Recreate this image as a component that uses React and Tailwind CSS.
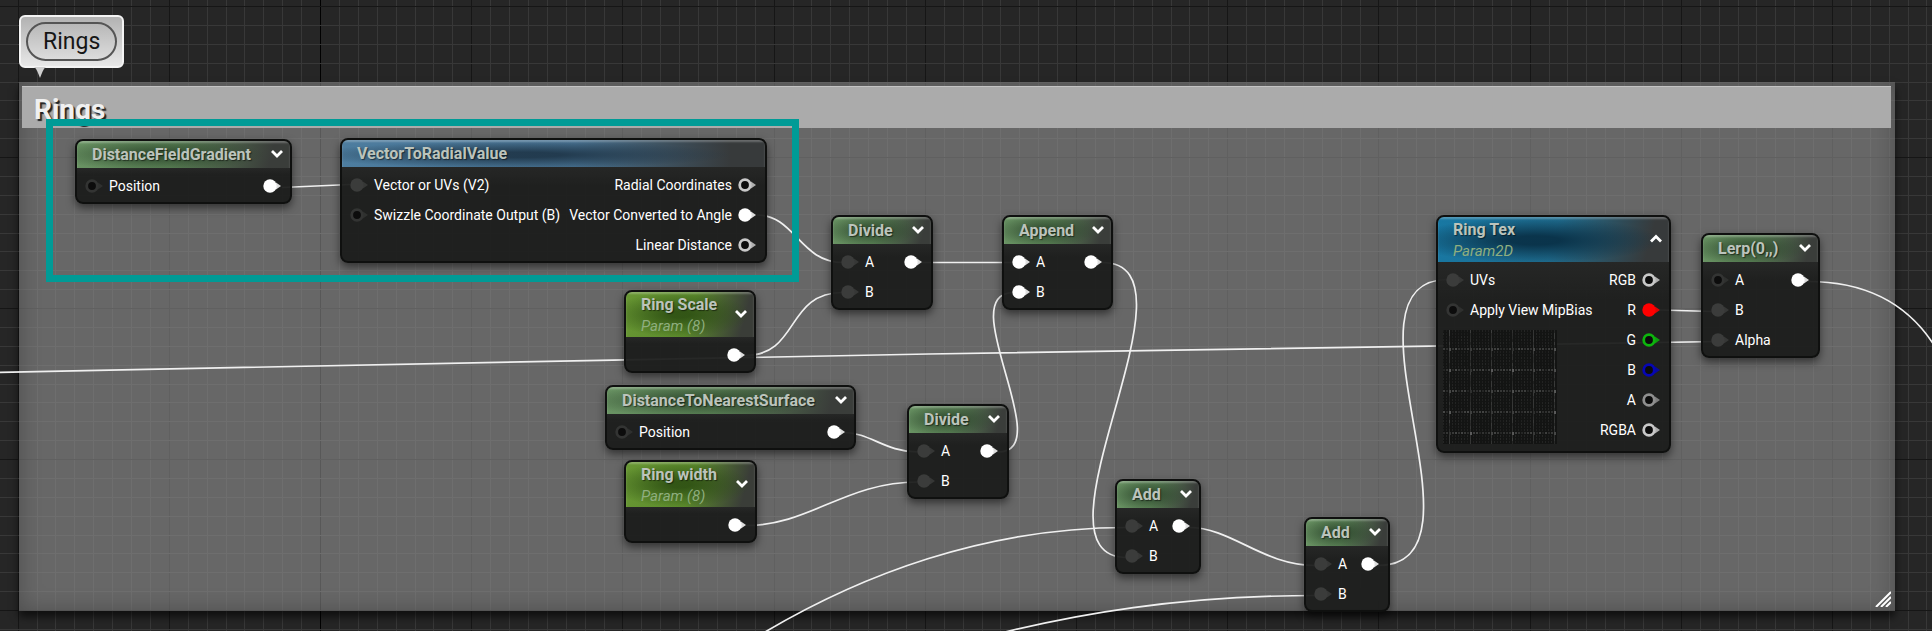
import React from "react";

const THEMES = {
  green: "bg-[radial-gradient(ellipse_50%_60%_at_38%_50%,rgba(38,62,38,0.7)_20%,transparent_100%),linear-gradient(105deg,#6a9464_0%,#5c8457_45%,#3a3d3a_90%)]",
  blue: "bg-[radial-gradient(ellipse_50%_50%_at_42%_55%,rgba(28,50,68,0.85)_20%,transparent_100%),linear-gradient(to_right,#4d7d9f_0%,#466f8e_55%,#373a3b_92%)]",
  lime: "bg-[radial-gradient(ellipse_55%_50%_at_42%_50%,rgba(40,72,16,0.8)_15%,transparent_100%),linear-gradient(105deg,#689733_0%,#5b8a2c_50%,#3a3d38_90%)]",
  cyan: "bg-[radial-gradient(ellipse_55%_50%_at_42%_52%,rgba(8,46,68,0.9)_20%,transparent_100%),linear-gradient(105deg,#1878a3_0%,#1f6c8e_50%,#373a3b_90%)]",
};

const IDLE = "#3b3c3b";

const NODES = [
  { id: "dfg", pos: "left-[75px] top-[139px] w-[217px]", theme: "green", title: "DistanceFieldGradient", toggle: "down",
    inputs: [["Position", "#333433", false]], outputs: [["", "#fff", true]] },
  { id: "vtr", pos: "left-[340px] top-[138px] w-[427px]", theme: "blue", title: "VectorToRadialValue",
    inputs: [["Vector or UVs (V2)", IDLE, true], ["Swizzle Coordinate Output (B)", "#333433", false]],
    outputs: [["Radial Coordinates", "#c8c8c8", false], ["Vector Converted to Angle", "#fff", true], ["Linear Distance", "#c8c8c8", false]] },
  { id: "scale", pos: "left-[624px] top-[290px] w-[132px]", theme: "lime", title: "Ring Scale", sub: "Param (8)", toggle: "down",
    inputs: [], outputs: [["", "#fff", true]] },
  { id: "dtns", pos: "left-[605px] top-[385px] w-[251px]", theme: "green", title: "DistanceToNearestSurface", toggle: "down",
    inputs: [["Position", "#333433", false]], outputs: [["", "#fff", true]] },
  { id: "width", pos: "left-[624px] top-[460px] w-[133px]", theme: "lime", title: "Ring width", sub: "Param (8)", toggle: "down",
    inputs: [], outputs: [["", "#fff", true]] },
  { id: "div1", pos: "left-[831px] top-[215px] w-[102px]", theme: "green", title: "Divide", toggle: "down",
    inputs: [["A", IDLE, true], ["B", IDLE, true]], outputs: [["", "#fff", true]] },
  { id: "append", pos: "left-[1002px] top-[215px] w-[111px]", theme: "green", title: "Append", toggle: "down",
    inputs: [["A", "#fff", true], ["B", "#fff", true]], outputs: [["", "#fff", true]] },
  { id: "div2", pos: "left-[907px] top-[404px] w-[102px]", theme: "green", title: "Divide", toggle: "down",
    inputs: [["A", IDLE, true], ["B", IDLE, true]], outputs: [["", "#fff", true]] },
  { id: "add1", pos: "left-[1115px] top-[479px] w-[86px]", theme: "green", title: "Add", toggle: "down",
    inputs: [["A", IDLE, true], ["B", IDLE, true]], outputs: [["", "#fff", true]] },
  { id: "add2", pos: "left-[1304px] top-[517px] w-[86px]", theme: "green", title: "Add", toggle: "down",
    inputs: [["A", IDLE, true], ["B", IDLE, true]], outputs: [["", "#fff", true]] },
  { id: "tex", pos: "left-[1436px] top-[215px] w-[235px]", theme: "cyan", title: "Ring Tex", sub: "Param2D", toggle: "up", preview: true,
    inputs: [["UVs", IDLE, true], ["Apply View MipBias", "#333433", false]],
    outputs: [["RGB", "#c8c8c8", false], ["R", "#f00", true], ["G", "#0db50d", false], ["B", "#0606b4", false], ["A", "#8f8f8f", false], ["RGBA", "#c8c8c8", false]] },
  { id: "lerp", pos: "left-[1701px] top-[233px] w-[119px]", theme: "green", title: "Lerp(0,,)", toggle: "down",
    inputs: [["A", "#333433", false], ["B", IDLE, true], ["Alpha", IDLE, true]], outputs: [["", "#fff", true]] },
];

const WIRES = [
  "M0 372.3L600 360.4C1000 352.5 1500 343 1719 341.5",
  "M282 187.5L350 184.5",
  "M757 215C795 215 800 262.5 843 262.5",
  "M745 355.5C800 355.5 785 292.5 843 292.5",
  "M922 262.5L1014 262.5",
  "M844 432.5C870 432.5 885 452 918 452",
  "M746 525.5C810 525.5 845 482 918 482",
  "M998 452C1059 452 951 292.5 1014 292.5",
  "M1102 262.5C1210 262.5 1020 557.5 1127 557.5",
  "M760 635C860 575 985 527.5 1127 527.5",
  "M1189 527.5C1232 527.5 1262 565.5 1316 565.5",
  "M985 637C1075 614 1180 595.5 1316 595.5",
  "M1378 565.5C1498 565.5 1329 279.5 1448 279.5",
  "M1660 310L1713 311.5",
  "M1808 281.5C1860 281.5 1905 300 1934 345",
];

const MINOR_X = Array.from({ length: 103 }, (_, i) => i - 17);
const MINOR_Y = Array.from({ length: 34 }, (_, i) => i);

function Grid() {
  return (
    <svg className="absolute inset-0 h-full w-full" aria-hidden="true" shapeRendering="crispEdges">
      {MINOR_X.map((i) => {
        const major = i % 8 === 0;
        const x = Math.round(320 + i * 18.9);
        return <rect key={"x" + i} x={x} y="0" width="1" height="100%" fill={i === 0 ? "#000" : major ? "#161616" : "#383838"} />;
      })}
      {MINOR_Y.map((i) => {
        const major = i % 8 === 0;
        const y = Math.round(6 + i * 18.875);
        return <rect key={"y" + i} x="0" y={y} width="100%" height="1" fill={major ? "#161616" : "#383838"} />;
      })}
    </svg>
  );
}

function Pin({ color, filled }) {
  return (
    <svg className="h-[14px] w-[18px] shrink-0" viewBox="0 0 18 14" aria-hidden="true">
      <path d="M13 3.5L18 7L13 10.5Z" fill={color} opacity="0.85" />
      {filled ? (
        <circle cx="7" cy="7" r="6.7" fill={color} />
      ) : (
        <circle cx="7" cy="7" r="5.3" fill="#0c0c0c" stroke={color} strokeWidth="2.8" />
      )}
    </svg>
  );
}

function Preview() {
  const dots = [];
  for (let r = 0; r < 38; r++) {
    for (let c = 0; c < 38; c++) {
      const n = Math.abs(Math.sin(r * 12.9898 + c * 78.233) * 43758.5453) % 1;
      const row = r % 7 === 6 ? 0.14 : 0;
      const column = c % 7 === 2 ? 0.1 : 0;
      const o = 0.03 + n * 0.05 + (row + column) * (0.3 + n * 0.7);
      dots.push(<rect key={r * 38 + c} x={c * 3} y={r * 3} width={row ? 2 : 1} height={column ? 3 : 2} fill="#fff" opacity={o.toFixed(2)} />);
    }
  }
  return (
    <svg className="mt-[5px] ml-[5px] h-[114px] w-[114px]" viewBox="0 0 114 114" aria-hidden="true" shapeRendering="crispEdges">
      <rect width="114" height="114" fill="#131413" />
      {dots}
    </svg>
  );
}

function Node({ node }) {
  return (
    <section
      className={"absolute overflow-hidden rounded-lg border-2 border-[#0f100f] bg-[#1b1c1b]/95 shadow-[0_4px_8px_rgba(0,0,0,0.5)] " + node.pos}
      aria-label={node.title}
    >
      <header
        className={
          "flex items-center justify-between pr-[7px] pl-[15px] shadow-[inset_0_2px_2px_rgba(255,255,255,0.25)] " +
          (node.sub ? "h-[45px] " : "h-[27px] ") + THEMES[node.theme]
        }
      >
        <div className="flex flex-col">
          <h2 className="text-base leading-[22px] font-bold text-[#bcc4bc] [text-shadow:1px_1px_1px_rgba(0,0,0,0.5)]">{node.title}</h2>
          {node.sub && <p className="text-[15px] leading-[20px] text-[#8fae7f] italic">{node.sub}</p>}
        </div>
        {node.toggle && (
          <button type="button" className="flex pb-0.5" aria-label={node.toggle === "up" ? "Collapse" : "Expand"}>
            <svg className="h-[10px] w-[12px]" viewBox="0 0 12 10" fill="none" stroke="#fff" strokeWidth="2.8">
              <path d={node.toggle === "up" ? "M1 7.5L6 2.5L11 7.5" : "M1 2L6 7L11 2"} />
            </svg>
          </button>
        )}
      </header>
      <div className={"flex justify-between bg-linear-to-b from-[#262726] to-[#1b1c1b]/0 to-20% pt-[3px] " + (node.preview ? "pb-[6px]" : "pb-px")}>
        <div>
          {node.inputs.map(([label, color, filled]) => (
            <div key={label} className="flex h-[30px] items-center gap-[6px] pl-[8px]">
              <Pin color={color} filled={filled} />
              <span>{label}</span>
            </div>
          ))}
          {node.preview && <Preview />}
        </div>
        <div>
          {node.outputs.map(([label, color, filled], i) => (
            <div key={i} className="flex h-[30px] items-center justify-end gap-[6px] pr-[9px]">
              {label && <span>{label}</span>}
              <Pin color={color} filled={filled} />
            </div>
          ))}
        </div>
      </div>
    </section>
  );
}

export default function App() {
  return (
    <main className="relative min-h-screen w-full overflow-hidden bg-[#262626] font-[Roboto,sans-serif] text-[14px] leading-5 whitespace-nowrap text-white">
      <Grid />

      <section className="absolute top-[82px] right-[37px] left-[19px] h-[529px] bg-[#929292]/60 pt-1 pr-1 pl-[3px] shadow-[inset_0_0_22px_rgba(0,0,0,0.25),0_6px_8px_rgba(0,0,0,0.6)]">
        <h1 className="h-[42px] border-t border-[#c4c4c4] bg-[#ababab] px-[12px] text-[28px] leading-[46px] font-bold text-[#f0f0f0] [text-shadow:2px_2px_1px_#222]">
          Rings
        </h1>
        <svg className="absolute right-1 bottom-1 h-4 w-4" viewBox="0 0 16 16" stroke="#fff" strokeWidth="2" aria-hidden="true">
          <path d="M1 16L16 1M6 16L16 6M11 16L16 11" />
        </svg>
      </section>

      <svg className="absolute inset-0 h-full w-full" aria-hidden="true" fill="none" stroke="#f0f0f0" strokeWidth="1.7">
        {WIRES.map((d) => (
          <path key={d} d={d} />
        ))}
      </svg>

      {NODES.map((node) => (
        <Node key={node.id} node={node} />
      ))}

      <div className="absolute top-[119px] left-[46px] h-[163px] w-[753px] border-[7px] border-[#009b96]" />

      <div className="absolute top-[15px] left-[19px] rounded-md border-2 border-[#f4f4f4] bg-linear-to-b from-[#b2b2b2] to-[#e8e8e8] p-[5px]">
        <div className="rounded-full border-2 border-[#555] bg-linear-to-b from-[#b8b8b8] to-[#dcdcdc] px-[15px] text-[23px] leading-[35px] text-[#161616]">
          Rings
        </div>
        <svg className="absolute top-full left-[13px] h-3 w-3" viewBox="0 0 12 12" aria-hidden="true">
          <path d="M0 1H12C9 3 8 7 6 12C4 7 3 3 0 1Z" fill="#cfcfcf" />
        </svg>
      </div>
    </main>
  );
}
